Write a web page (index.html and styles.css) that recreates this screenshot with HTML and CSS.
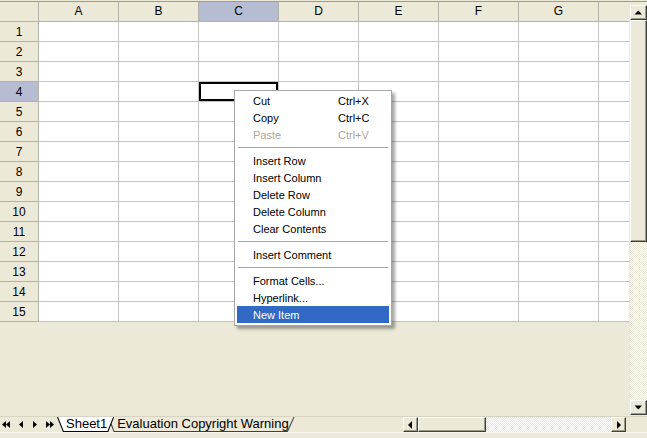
FILE: index.html
```html
<!DOCTYPE html>
<html>
<head>
<meta charset="utf-8">
<link rel="stylesheet" href="styles.css">
</head>
<body>
<div class="app">
  <div class="main">
    <div class="sheet">
      <div class="grid">
        <div class="ch corner"></div><div class="ch">A</div><div class="ch">B</div><div class="ch sel">C</div><div class="ch">D</div><div class="ch">E</div><div class="ch">F</div><div class="ch">G</div><div class="ch last"></div>
        <div class="rh">1</div><div class="c"></div><div class="c"></div><div class="c"></div><div class="c"></div><div class="c"></div><div class="c"></div><div class="c"></div><div class="c last"></div>
        <div class="rh">2</div><div class="c"></div><div class="c"></div><div class="c"></div><div class="c"></div><div class="c"></div><div class="c"></div><div class="c"></div><div class="c last"></div>
        <div class="rh">3</div><div class="c"></div><div class="c"></div><div class="c"></div><div class="c"></div><div class="c"></div><div class="c"></div><div class="c"></div><div class="c last"></div>
        <div class="rh sel">4</div><div class="c"></div><div class="c"></div><div class="c cur"></div><div class="c"></div><div class="c"></div><div class="c"></div><div class="c"></div><div class="c last"></div>
        <div class="rh">5</div><div class="c"></div><div class="c"></div><div class="c"></div><div class="c"></div><div class="c"></div><div class="c"></div><div class="c"></div><div class="c last"></div>
        <div class="rh">6</div><div class="c"></div><div class="c"></div><div class="c"></div><div class="c"></div><div class="c"></div><div class="c"></div><div class="c"></div><div class="c last"></div>
        <div class="rh">7</div><div class="c"></div><div class="c"></div><div class="c"></div><div class="c"></div><div class="c"></div><div class="c"></div><div class="c"></div><div class="c last"></div>
        <div class="rh">8</div><div class="c"></div><div class="c"></div><div class="c"></div><div class="c"></div><div class="c"></div><div class="c"></div><div class="c"></div><div class="c last"></div>
        <div class="rh">9</div><div class="c"></div><div class="c"></div><div class="c"></div><div class="c"></div><div class="c"></div><div class="c"></div><div class="c"></div><div class="c last"></div>
        <div class="rh">10</div><div class="c"></div><div class="c"></div><div class="c"></div><div class="c"></div><div class="c"></div><div class="c"></div><div class="c"></div><div class="c last"></div>
        <div class="rh">11</div><div class="c"></div><div class="c"></div><div class="c"></div><div class="c"></div><div class="c"></div><div class="c"></div><div class="c"></div><div class="c last"></div>
        <div class="rh">12</div><div class="c"></div><div class="c"></div><div class="c"></div><div class="c"></div><div class="c"></div><div class="c"></div><div class="c"></div><div class="c last"></div>
        <div class="rh">13</div><div class="c"></div><div class="c"></div><div class="c"></div><div class="c"></div><div class="c"></div><div class="c"></div><div class="c"></div><div class="c last"></div>
        <div class="rh">14</div><div class="c"></div><div class="c"></div><div class="c"></div><div class="c"></div><div class="c"></div><div class="c"></div><div class="c"></div><div class="c last"></div>
        <div class="rh">15</div><div class="c"></div><div class="c"></div><div class="c"></div><div class="c"></div><div class="c"></div><div class="c"></div><div class="c"></div><div class="c last"></div>
      </div>
      <div class="empty"></div>
    </div>
    <div class="vscroll">
      <div class="sbtn vbtn"><svg width="15" height="13" viewBox="0 0 15 13"><polygon points="3.5,8.5 11,8.5 7.25,4.5" fill="#000"/></svg></div>
      <div class="thumb vthumb"></div>
      <div class="track"></div>
      <div class="sbtn vbtn"><svg width="15" height="13" viewBox="0 0 15 13"><polygon points="3.5,4.5 11,4.5 7.25,8.5" fill="#000"/></svg></div>
    </div>
  </div>
  <div class="bottom">
    <div class="nav">
      <svg width="57" height="15" viewBox="0 0 57 15">
        <polygon points="6,4 2,7.5 6,11" fill="#000"/>
        <polygon points="10,4 6,7.5 10,11" fill="#000"/>
        <polygon points="23,4 19,7.5 23,11" fill="#000"/>
        <polygon points="33,4 37,7.5 33,11" fill="#000"/>
        <polygon points="46,4 50,7.5 46,11" fill="#000"/>
        <polygon points="50,4 54,7.5 50,11" fill="#000"/>
      </svg>
    </div>
    <div class="tabs">
      <div class="tab active">
        <svg class="tabshape" viewBox="0 0 54 15" preserveAspectRatio="none"><polygon points="0.5,0 6,14.5 48,14.5 53.5,0" fill="#fff"/><polyline points="0.5,0 6,14.5 48,14.5 53.5,0" fill="none" stroke="#000" stroke-width="1"/></svg>
        <span class="tabtext">Sheet1</span>
      </div>
      <div class="tab other">
        <svg class="tabshape" viewBox="0 0 185 15" preserveAspectRatio="none"><polyline points="0.5,0 6,14.5 178,14.5 184.5,0" fill="none" stroke="#404040" stroke-width="1"/></svg>
        <span class="tabtext">Evaluation Copyright Warning</span>
      </div>
    </div>
    <div class="hscroll">
      <div class="sbtn hbtn"><svg width="13" height="12" viewBox="0 0 13 12"><polygon points="8,2 8,10 4,6" fill="#000"/></svg></div>
      <div class="thumb hthumb"></div>
      <div class="track"></div>
      <div class="sbtn hbtn"><svg width="13" height="12" viewBox="0 0 13 12"><polygon points="5,2 5,10 9,6" fill="#000"/></svg></div>
    </div>
  </div>
  <div class="status"></div>

  <div class="menu">
    <div class="mi"><span>Cut</span><span>Ctrl+X</span></div>
    <div class="mi"><span>Copy</span><span>Ctrl+C</span></div>
    <div class="mi dis"><span>Paste</span><span>Ctrl+V</span></div>
    <div class="sep"></div>
    <div class="mi"><span>Insert Row</span></div>
    <div class="mi"><span>Insert Column</span></div>
    <div class="mi"><span>Delete Row</span></div>
    <div class="mi"><span>Delete Column</span></div>
    <div class="mi"><span>Clear Contents</span></div>
    <div class="sep"></div>
    <div class="mi"><span>Insert Comment</span></div>
    <div class="sep"></div>
    <div class="mi"><span>Format Cells...</span></div>
    <div class="mi"><span>Hyperlink...</span></div>
    <div class="mi hi"><span>New Item</span></div>
  </div>
</div>
</body>
</html>
```

FILE: styles.css
```css
* { box-sizing: border-box; }
html, body { margin: 0; padding: 0; }
body {
  width: 647px;
  height: 438px;
  overflow: hidden;
  background: #ECE9D8;
  font-family: "Liberation Sans", Arial, sans-serif;
  color: #000;
}
.app {
  position: relative;
  width: 647px;
  height: 438px;
  display: flex;
  flex-direction: column;
}
.main {
  display: flex;
  height: 416px;
}
.sheet {
  width: 629px;
  display: flex;
  flex-direction: column;
}
.grid {
  margin-top: 1px;
  display: grid;
  grid-template-columns: 39px repeat(7, 80px) 30px;
  grid-template-rows: 21px repeat(15, 20px);
  background: #fff;
}
.ch, .rh {
  background: #ECE9D8;
  font-size: 12px;
  display: flex;
  align-items: center;
  justify-content: center;
  border-right: 1px solid #b4b2a8;
  border-bottom: 1px solid #b4b2a8;
}
.ch {
  border-top: 1px solid #9a9a9a;
  padding-bottom: 1px;
}
.ch.last { border-right: none; }
.rh { padding-top: 1px; }
.sel { background: #B6BDD2; }
.c {
  border-right: 1px solid #c4c4c4;
  border-bottom: 1px solid #c4c4c4;
  background: #fff;
}
.c.last { border-right: none; }
.c.cur { box-shadow: inset 0 0 0 2px #000; }
.empty {
  flex: 1;
  background: #ECE9D8;
}
.vscroll {
  width: 18px;
  margin-top: 1px;
  border-top: 1px solid #9a9a9a;
  padding: 3px 0 1px 1px;
  display: flex;
  flex-direction: column;
}
.sbtn {
  background: #ECE9D8;
  border: 1px solid;
  border-color: #fff #404040 #404040 #fff;
  box-shadow: inset -1px -1px 0 #9d9a8a;
  display: flex;
  align-items: center;
  justify-content: center;
  flex: none;
}
.sbtn svg { display: block; }
.vbtn { height: 15px; width: 17px; }
.thumb {
  background: #ECE9D8;
  border: 1px solid;
  border-color: #fff #404040 #404040 #fff;
  box-shadow: inset -1px -1px 0 #9d9a8a;
  flex: none;
}
.vthumb { height: 222px; width: 17px; }
.track {
  flex: 1;
  background-color: #ECE9D8;
  background-image: repeating-conic-gradient(#fff 0 25%, #ECE9D8 0 50%);
  background-size: 2px 2px;
}
.bottom {
  height: 16px;
  border-top: 1px solid #d8d4c4;
  display: flex;
  align-items: stretch;
}
.nav {
  width: 57px;
  flex: none;
}
.nav svg { display: block; }
.tabs {
  display: flex;
  height: 15px;
}
.tab {
  position: relative;
  height: 15px;
  display: flex;
  align-items: center;
  font-size: 13px;
  padding: 0 6px 1px 9px;
  flex: none;
}
.tab.active { padding-right: 7px; z-index: 2; }
.tab.other { margin-left: -6px; z-index: 1; }
.tabshape {
  position: absolute;
  left: 0;
  top: 0;
  width: 100%;
  height: 100%;
}
.tabtext {
  position: relative;
  white-space: nowrap;
  line-height: 14px;
}
.hscroll {
  margin-left: auto;
  margin-right: 21px;
  width: 223px;
  height: 15px;
  display: flex;
}
.hbtn { width: 15px; height: 15px; }
.hthumb { width: 68px; height: 15px; }
.status {
  flex: 1;
  border-top: 1px solid #f6f4ec;
  background: #ECE9D8;
}
.menu {
  position: absolute;
  left: 234px;
  top: 90px;
  width: 158px;
  height: 236px;
  background: #fff;
  border: 1px solid #a7a6aa;
  padding: 1px 2px 2px 2px;
  box-shadow: 3px 3px 3px rgba(0, 0, 0, 0.35);
  font-size: 11px;
  z-index: 10;
}
.mi {
  height: 17px;
  line-height: 18px;
  display: grid;
  grid-template-columns: 85px auto;
  padding-left: 16px;
  white-space: nowrap;
}
.mi.dis { color: #aca899; }
.mi.hi { background: #316AC5; color: #fff; }
.sep {
  margin: 4px 1px;
  height: 1px;
  border-top: 1px solid #aca899;
}
```
